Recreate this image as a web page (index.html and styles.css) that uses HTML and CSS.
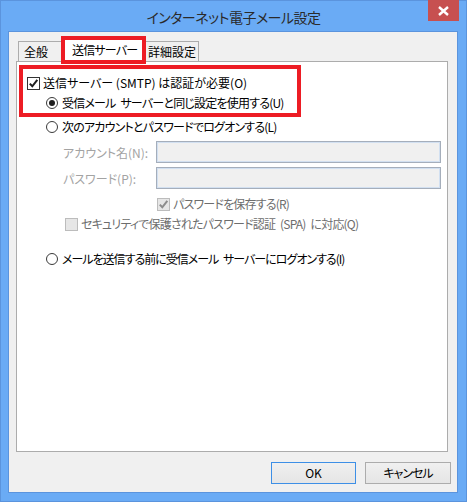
FILE: index.html
```html
<!DOCTYPE html>
<html lang="ja">
<head>
<meta charset="utf-8">
<title>インターネット電子メール設定</title>
<link rel="stylesheet" href="styles.css">
</head>
<body>
<div class="window">
  <div class="titlebar">
    <div class="spacer"></div>
    <div class="title">インターネット電子メール設定</div>
    <div class="close">
      <svg width="11" height="10" viewBox="0 0 11 10"><path d="M1 1 L10 9 M10 1 L1 9" stroke="#fff" stroke-width="2.4" fill="none"/></svg>
    </div>
  </div>
  <div class="client">
    <div class="tabs">
      <div class="tab tab-general">全般</div>
      <div class="tab tab-active tight">送信サーバー</div>
      <div class="tab tab-detail">詳細設定</div>
    </div>
    <div class="panel">
      <div class="highlight">
        <div class="row">
          <span class="check"><svg width="11" height="11" viewBox="0 0 11 11"><path d="M1.8 5.6 L4.3 8.3 L9.3 1.8" stroke="#1e1e1e" stroke-width="2" fill="none"/></svg></span>
          <span>送信サーバー (SMTP) は認証が必要(O)</span>
        </div>
        <div class="row row-same">
          <span class="radio radio-on"></span>
          <span class="tight">受信メール サーバーと同じ設定を使用する(U)</span>
        </div>
      </div>
      <div class="row row-logon">
        <span class="radio"></span>
        <span class="tight">次のアカウントとパスワードでログオンする(L)</span>
      </div>
      <div class="field-row field-account">
        <span class="label">アカウント名(N):</span>
        <span class="field"></span>
      </div>
      <div class="field-row field-password">
        <span class="label">パスワード(P):</span>
        <span class="field"></span>
      </div>
      <div class="row row-save disabled">
        <span class="check check-disabled"><svg width="11" height="11" viewBox="0 0 11 11"><path d="M1.8 5.6 L4.3 8.3 L9.3 1.8" stroke="#8c8c8c" stroke-width="2" fill="none"/></svg></span>
        <span class="tight">パスワードを保存する(R)</span>
      </div>
      <div class="row row-spa disabled">
        <span class="check check-disabled"></span>
        <span class="tight">セキュリティで保護されたパスワード認証 (SPA) に対応(Q)</span>
      </div>
      <div class="row row-before">
        <span class="radio"></span>
        <span class="tighter">メールを送信する前に受信メール サーバーにログオンする(I)</span>
      </div>
    </div>
    <div class="buttons">
      <button class="btn btn-ok">OK</button>
      <button class="btn btn-cancel tighter">キャンセル</button>
    </div>
  </div>
</div>
</body>
</html>
```

FILE: styles.css
```css
html, body {
  margin: 0;
  padding: 0;
  background: #6aabf5;
}
body {
  font-family: "Noto Sans CJK JP", "Noto Sans", sans-serif;
  font-size: 12px;
  color: #000;
  font-feature-settings: "palt";
}
.tight {
  letter-spacing: -0.8px;
  word-spacing: 3px;
}
.tighter {
  letter-spacing: -1px;
  word-spacing: 3px;
}
.window {
  width: 467px;
  height: 502px;
  box-sizing: border-box;
  background: #6aabf5;
  border: 1px solid #5b94dd;
  display: flex;
  flex-direction: column;
}
.titlebar {
  height: 30px;
  display: grid;
  grid-template-columns: 1fr auto 1fr;
  align-items: center;
}
.title {
  font-size: 14px;
  letter-spacing: -0.5px;
  color: #2a2a2a;
  line-height: 20px;
  padding-top: 1px;
}
.close {
  justify-self: end;
  align-self: start;
  margin-top: -1px;
  margin-right: 7px;
  width: 31px;
  height: 21px;
  background: #c75050;
  display: flex;
  align-items: center;
  justify-content: center;
}
.client {
  flex: 1;
  margin: 0 8px 8px 7px;
  border: 1px solid #5b94dd;
  background: #f0f0f0;
  padding: 4px 6px 8px 7px;
  display: flex;
  flex-direction: column;
}
.tabs {
  display: flex;
  align-items: flex-end;
  padding-left: 2px;
}
.tab {
  height: 20px;
  box-sizing: border-box;
  border: 1px solid #acacac;
  border-bottom: 0;
  background: #f0f0f0;
  line-height: 20px;
  white-space: nowrap;
}
.tab-general {
  width: 44px;
  padding-left: 5px;
}
.tab-active {
  width: 85px;
  height: 28px;
  border: 4px solid #ed1c24;
  background: #fff;
  margin-left: -1px;
  margin-bottom: -3px;
  z-index: 2;
  padding-left: 7px;
  line-height: 19px;
}
.tab-detail {
  width: 54px;
  margin-left: -1px;
  padding-left: 2px;
}
.panel {
  flex: 1;
  margin-right: 3px;
  background: #fff;
  border: 1px solid #acacac;
}
.highlight {
  margin: 3px 0 0 2px;
  width: 282px;
  box-sizing: border-box;
  border: 4px solid #ed1c24;
  padding: 6px 0 2px 4px;
  display: flex;
  flex-direction: column;
  gap: 4px;
}
.row {
  display: flex;
  align-items: center;
  height: 16px;
  line-height: 16px;
  white-space: nowrap;
}
.row-same {
  padding-left: 19px;
}
.row-logon {
  margin: 2px 0 0 29px;
}
.field-row {
  display: flex;
  align-items: center;
  height: 22px;
  margin-left: 46px;
}
.field-account {
  margin-top: 6px;
}
.field-password {
  margin-top: 4px;
}
.label {
  width: 93px;
  color: #a3a3a3;
  white-space: nowrap;
}
.field {
  width: 285px;
  height: 22px;
  box-sizing: border-box;
  border: 1px solid #a5aebb;
  box-shadow: inset 0 0 0 1px #d2e0f1;
  background: #f0f0f0;
}
.row-save {
  margin: 7px 0 0 140px;
}
.row-spa {
  margin: 4px 0 0 48px;
}
.row-before {
  margin: 19px 0 0 29px;
}
.disabled {
  color: #6d6d6d;
}
.check {
  width: 13px;
  height: 13px;
  box-sizing: border-box;
  border: 1px solid #333;
  background: #fff;
  margin-right: 3px;
  display: inline-flex;
  align-items: center;
  justify-content: center;
  flex: none;
}
.check-disabled {
  border-color: #bcbcbc;
  background: #e6e6e6;
}
.radio {
  width: 12px;
  height: 12px;
  box-sizing: border-box;
  border: 1px solid #3a3a3a;
  border-radius: 50%;
  background: #fff;
  margin-right: 4px;
  display: inline-flex;
  align-items: center;
  justify-content: center;
  flex: none;
}
.radio-on::after {
  content: "";
  width: 6px;
  height: 6px;
  border-radius: 50%;
  background: #1e1e1e;
}
.buttons {
  display: flex;
  justify-content: flex-end;
  gap: 9px;
  margin-top: 10px;
}
.btn {
  height: 22px;
  box-sizing: border-box;
  border: 1px solid #acacac;
  background: linear-gradient(#f0f0f0, #e5e5e5);
  font: inherit;
  color: #000;
  padding: 0;
  line-height: 20px;
}
.btn-ok {
  width: 85px;
  border-color: #3d8fe6;
}
.btn-cancel {
  width: 86px;
}
```
